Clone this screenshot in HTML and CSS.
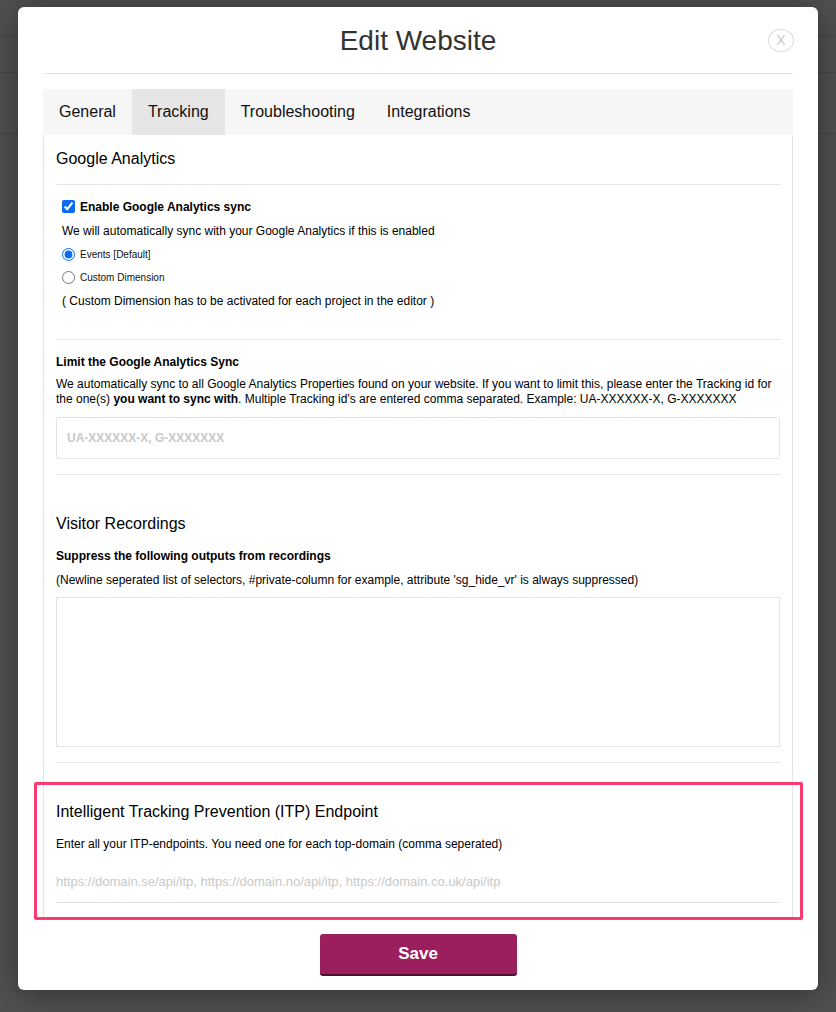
FILE: index.html
```html
<!DOCTYPE html>
<html lang="en">
<head>
<meta charset="utf-8">
<title>Edit Website</title>
<link rel="stylesheet" href="styles.css">
</head>
<body>
<div class="backdrop">
  <div class="back-row back-row-a"></div>
  <div class="back-row back-row-b"></div>
  <div class="back-row back-row-c"></div>
</div>
<div class="modal">
  <header class="modal-head">
    <h1 class="modal-title">Edit Website</h1>
    <span class="modal-close">X</span>
  </header>
  <nav class="tabs">
    <span class="tab">General</span>
    <span class="tab tab-active">Tracking</span>
    <span class="tab">Troubleshooting</span>
    <span class="tab">Integrations</span>
  </nav>
  <div class="panel">
    <section class="sec sec-ga">
      <h2 class="sec-title">Google Analytics</h2>
      <div class="opts">
        <label class="opt-main"><input class="check" type="checkbox" checked><b>Enable Google Analytics sync</b></label>
        <p class="txt opt-desc">We will automatically sync with your Google Analytics if this is enabled</p>
        <label class="opt-radio"><input class="radio" type="radio" name="m" checked>Events [Default]</label>
        <label class="opt-radio"><input class="radio" type="radio" name="m">Custom Dimension</label>
        <p class="txt opt-note">( Custom Dimension has to be activated for each project in the editor )</p>
      </div>
    </section>
    <section class="sec sec-limit">
      <h3 class="label">Limit the Google Analytics Sync</h3>
      <p class="txt limit-desc">We automatically sync to all Google Analytics Properties found on your website. If you want to limit this, please enter the Tracking id for the one(s) <b>you want to sync with</b>. Multiple Tracking id's are entered comma separated. Example: UA-XXXXXX-X, G-XXXXXXX</p>
      <input class="field" type="text" placeholder="UA-XXXXXX-X, G-XXXXXXX">
    </section>
    <section class="sec sec-vr">
      <h2 class="sec-title">Visitor Recordings</h2>
      <h3 class="label vr-label">Suppress the following outputs from recordings</h3>
      <p class="txt vr-desc">(Newline seperated list of selectors, #private-column for example, attribute 'sg_hide_vr' is always suppressed)</p>
      <textarea class="area"></textarea>
    </section>
    <section class="sec sec-itp">
      <h2 class="sec-title">Intelligent Tracking Prevention (ITP) Endpoint</h2>
      <p class="txt itp-desc">Enter all your ITP-endpoints. You need one for each top-domain (comma seperated)</p>
      <input class="field-plain" type="text" placeholder="https://domain.se/api/itp, https://domain.no/api/itp, https://domain.co.uk/api/itp">
    </section>
  </div>
  <footer class="modal-foot">
    <button class="save" type="button">Save</button>
  </footer>
</div>
<div class="highlight"></div>
</body>
</html>
```
FILE: styles.css
```css
* { box-sizing: border-box; }
html, body { margin: 0; height: 1012px; overflow: hidden; }
body {
  position: relative;
  background: #505050;
  font-family: "Liberation Sans", Arial, sans-serif;
  color: #000;
}
.backdrop { height: 1012px; background: #505050; }
.back-row { border-bottom: 1px solid #444; }
.back-row-a { height: 37px; }
.back-row-b { height: 36px; }
.back-row-c { height: 61px; }
.modal {
  position: absolute;
  left: 18px;
  top: 7px;
  width: 800px;
  height: 983px;
  padding: 0 25px;
  background: #fff;
  border-radius: 6px;
  box-shadow: 0 3px 30px rgba(0, 0, 0, 0.4);
  display: flex;
  flex-direction: column;
}
.modal-head {
  position: relative;
  height: 67px;
  flex: none;
  border-bottom: 1px solid #e5e5e5;
  text-align: center;
}
.modal-title {
  margin: 0;
  padding-top: 17px;
  font-size: 28px;
  line-height: 34px;
  font-weight: 400;
  color: #333;
}
.modal-close {
  position: absolute;
  right: -1px;
  top: 22px;
  width: 26px;
  height: 23px;
  border: 1px solid #dcdcdc;
  border-radius: 50%;
  font-size: 14px;
  line-height: 21px;
  text-align: center;
  color: #c8c8c8;
}
.tabs {
  display: flex;
  flex: none;
  margin-top: 15px;
  height: 46px;
  background: #f6f6f6;
}
.tab { padding: 0 16px; font-size: 16px; line-height: 45px; color: #111; }
.tab-active { background: #e6e6e6; }
.panel {
  flex: none;
  height: 783px;
  overflow: hidden;
  padding: 0 12px;
  border-left: 1px solid #e5e5e5;
  border-right: 1px solid #e5e5e5;
}
.sec { border-bottom: 1px solid #e5e5e5; }
.sec-title { margin: 0; font-size: 16px; line-height: 20px; font-weight: 400; }
.txt { margin: 0; font-size: 12px; line-height: 17px; }
.label { margin: 0; font-size: 12px; line-height: 16px; font-weight: 700; }
.sec-ga { padding-top: 14px; height: 205px; }
.sec-ga .sec-title { padding-bottom: 15px; border-bottom: 1px solid #e5e5e5; }
.opts { padding: 13px 0 0 6px; }
.opt-main { display: flex; align-items: center; height: 17px; font-size: 12px; }
.check { width: 13px; height: 13px; margin: 0 5px 0 0; accent-color: #0b6cf0; }
.opt-desc { margin-top: 8px; }
.opt-radio { display: flex; align-items: center; height: 13px; margin-top: 8px; font-size: 10px; color: #111; }
.opt-radio + .opt-radio { margin-top: 10px; }
.radio { width: 13px; height: 13px; margin: 0 5px 0 0; accent-color: #0b6cf0; }
.opt-note { margin-top: 9px; }
.sec-limit { padding-top: 14px; height: 135px; }
.limit-desc { margin-top: 7px; line-height: 15px; }
.field {
  display: block;
  width: 100%;
  height: 42px;
  margin-top: 10px;
  padding: 0 10px;
  border: 1px solid #e5e5e5;
  border-radius: 2px;
  background: #fff;
  font: 700 12px "Liberation Sans", Arial, sans-serif;
}
.field::placeholder { color: #c9c9c9; opacity: 1; }
.sec-vr { padding-top: 39px; height: 288px; }
.vr-label { margin-top: 14px; }
.vr-desc { margin-top: 8px; }
.area {
  display: block;
  width: 100%;
  height: 150px;
  margin-top: 8px;
  border: 1px solid #e5e5e5;
  border-radius: 0;
  background: #fff;
  resize: none;
}
.sec-itp { padding-top: 39px; height: 140px; }
.itp-desc { margin-top: 14px; }
.field-plain {
  display: block;
  width: 100%;
  height: 28px;
  margin-top: 14px;
  padding: 0;
  border: 0;
  background: #fff;
  font: 13px "Liberation Sans", Arial, sans-serif;
}
.field-plain::placeholder { color: #c9c9c9; opacity: 1; }
.modal-foot { flex: 1; display: flex; justify-content: center; padding-top: 16px; }
.save {
  width: 197px;
  height: 42px;
  border: 0;
  border-bottom: 2px solid #4d0f30;
  border-radius: 3px;
  background: #9a1f5c;
  color: #fff;
  font: 700 17px "Liberation Sans", Arial, sans-serif;
}
.highlight {
  position: absolute;
  left: 34px;
  top: 782px;
  width: 769px;
  height: 138px;
  border: 3px solid #fb3a72;
  border-radius: 2px;
}
```
